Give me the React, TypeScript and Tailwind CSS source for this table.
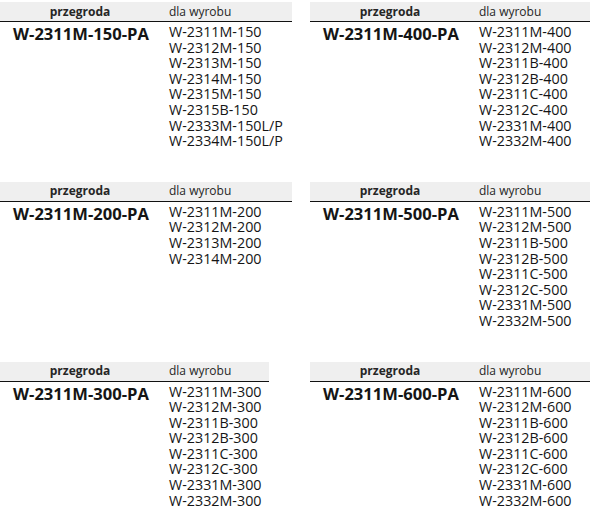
import React from "react";

type T = { title: string; items: string[]; right?: boolean; narrow?: boolean };

const rows: T[] = [
  {
    title: "W-2311M-150-PA",
    items: [
      "W-2311M-150",
      "W-2312M-150",
      "W-2313M-150",
      "W-2314M-150",
      "W-2315M-150",
      "W-2315B-150",
      "W-2333M-150L/P",
      "W-2334M-150L/P",
    ],
  },
  {
    title: "W-2311M-400-PA",
    right: true,
    items: [
      "W-2311M-400",
      "W-2312M-400",
      "W-2311B-400",
      "W-2312B-400",
      "W-2311C-400",
      "W-2312C-400",
      "W-2331M-400",
      "W-2332M-400",
    ],
  },
  {
    title: "W-2311M-200-PA",
    items: ["W-2311M-200", "W-2312M-200", "W-2313M-200", "W-2314M-200"],
  },
  {
    title: "W-2311M-500-PA",
    right: true,
    items: [
      "W-2311M-500",
      "W-2312M-500",
      "W-2311B-500",
      "W-2312B-500",
      "W-2311C-500",
      "W-2312C-500",
      "W-2331M-500",
      "W-2332M-500",
    ],
  },
  {
    title: "W-2311M-300-PA",
    narrow: true,
    items: [
      "W-2311M-300",
      "W-2312M-300",
      "W-2311B-300",
      "W-2312B-300",
      "W-2311C-300",
      "W-2312C-300",
      "W-2331M-300",
      "W-2332M-300",
    ],
  },
  {
    title: "W-2311M-600-PA",
    right: true,
    items: [
      "W-2311M-600",
      "W-2312M-600",
      "W-2311B-600",
      "W-2312B-600",
      "W-2311C-600",
      "W-2312C-600",
      "W-2331M-600",
      "W-2332M-600",
    ],
  },
];

function Table({ t }: { t: T }) {
  return (
    <div className={t.right ? "pl-[2px]" : t.narrow ? "w-[269px]" : ""}>
      <div className="flex h-[20px] items-center border-b border-[#111111] bg-[#efefef] text-[12px]">
        <div className="w-[160px] text-center font-bold text-[#262626]">przegroda</div>
        <div className="pl-[9px] text-[#262626]">dla wyrobu</div>
      </div>
      <div className="flex pt-[2px]">
        <div className="w-[160px] pl-[13px] text-[16.6px] font-bold leading-[19px] text-[#151515]">
          {t.title}
        </div>
        <div className="pl-[9px] text-[14.3px] leading-[15.6px] text-[#151515]">
          {t.items.map((i) => (
            <div key={i}>{i}</div>
          ))}
        </div>
      </div>
    </div>
  );
}

export default function App() {
  return (
    <div
      className="h-[512px] w-[590px] overflow-hidden bg-white pt-[2px]"
      style={{ fontFamily: '"Open Sans", sans-serif' }}
    >
      <div className="grid grid-cols-[292px_282px] gap-x-[16px] gap-y-[33px]">
        {rows.map((t) => (
          <Table key={t.title} t={t} />
        ))}
      </div>
    </div>
  );
}
